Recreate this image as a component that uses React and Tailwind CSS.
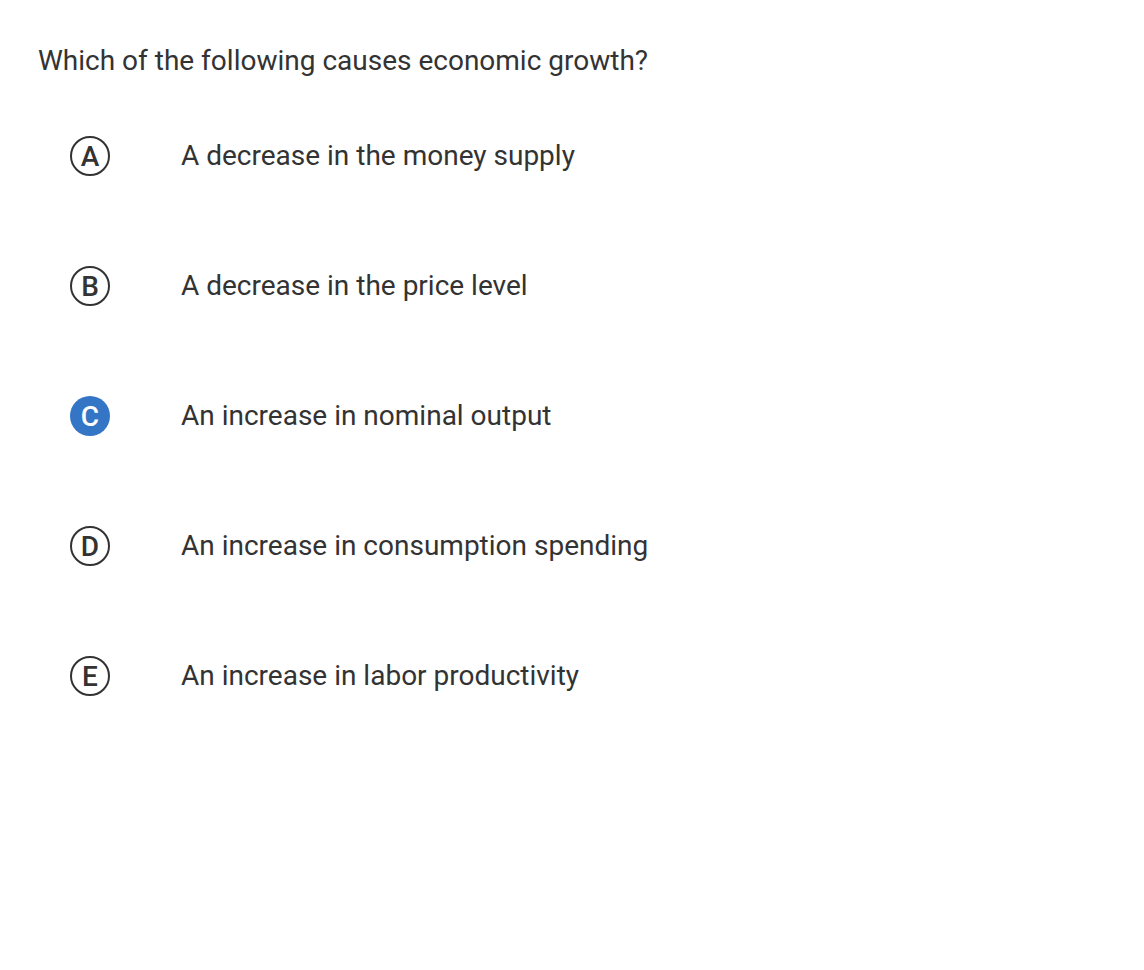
export default function App() {
  const options = [
    { l: "A", t: "A decrease in the money supply" },
    { l: "B", t: "A decrease in the price level" },
    { l: "C", t: "An increase in nominal output", sel: true },
    { l: "D", t: "An increase in consumption spending" },
    { l: "E", t: "An increase in labor productivity" },
  ];
  return (
    <div className="w-[1144px] h-[970px] bg-white text-[#333333]" style={{ fontFamily: "Roboto, sans-serif" }}>
      <div className="pl-[38px] pt-[44px]">
        <div className="text-[28px] leading-[34px]">Which of the following causes economic growth?</div>
        <div className="flex flex-col gap-[90px] mt-[58px] pl-[32px]">
          {options.map((o) => (
            <div key={o.l} className="flex items-center h-[40px]">
              <div
                className={
                  o.sel
                    ? "w-[40px] h-[40px] rounded-full bg-[#3575c5] text-white flex items-center justify-center text-[28px] leading-none font-medium pt-[2px]"
                    : "w-[40px] h-[40px] rounded-full border-2 border-[#333333] text-[#333333] flex items-center justify-center text-[28px] leading-none font-medium pt-[2px]"
                }
              >
                {o.l}
              </div>
              <div className="ml-[71px] text-[28px] leading-[34px]">{o.t}</div>
            </div>
          ))}
        </div>
      </div>
    </div>
  );
}
